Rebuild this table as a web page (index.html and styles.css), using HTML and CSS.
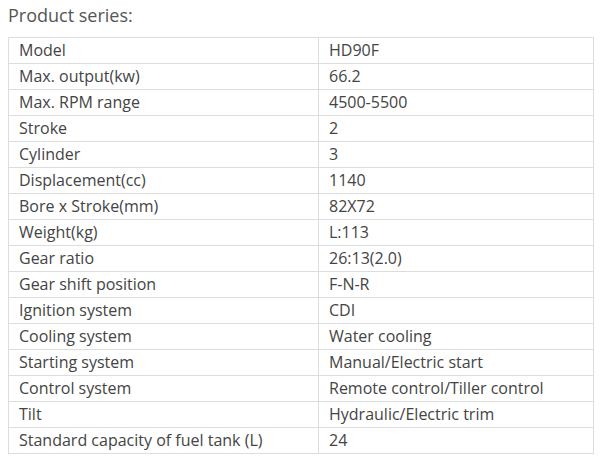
FILE: index.html
```html
<!DOCTYPE html>
<html>
<head>
<meta charset="utf-8">
<link rel="stylesheet" href="styles.css">
</head>
<body>
<h2 class="title">Product series:</h2>
<table class="spec">
<tr><td>Model</td><td>HD90F</td></tr>
<tr><td>Max. output(kw)</td><td>66.2</td></tr>
<tr><td>Max. RPM range</td><td>4500-5500</td></tr>
<tr><td>Stroke</td><td>2</td></tr>
<tr><td>Cylinder</td><td>3</td></tr>
<tr><td>Displacement(cc)</td><td>1140</td></tr>
<tr><td>Bore x Stroke(mm)</td><td>82X72</td></tr>
<tr><td>Weight(kg)</td><td>L:113</td></tr>
<tr><td>Gear ratio</td><td>26:13(2.0)</td></tr>
<tr><td>Gear shift position</td><td>F-N-R</td></tr>
<tr><td>Ignition system</td><td>CDI</td></tr>
<tr><td>Cooling system</td><td>Water cooling</td></tr>
<tr><td>Starting system</td><td>Manual/Electric start</td></tr>
<tr><td>Control system</td><td>Remote control/Tiller control</td></tr>
<tr><td>Tilt</td><td>Hydraulic/Electric trim</td></tr>
<tr><td>Standard capacity of fuel tank (L)</td><td>24</td></tr>
</table>
</body>
</html>
```
FILE: styles.css
```css
body {
  margin: 0;
  padding: 0 8px;
  font-family: "Open Sans", "Noto Sans", sans-serif;
  color: #444;
  background: #fff;
}
.title {
  margin: 0;
  height: 37px;
  font-size: 18px;
  font-weight: normal;
  line-height: 30px;
  color: #555;
}
.spec {
  width: 586px;
  border-collapse: collapse;
  font-size: 16px;
}
.spec td {
  border: 1px solid #ddd;
  height: 25px;
  padding: 0 10px;
  line-height: 25px;
  white-space: nowrap;
}
.spec td:first-child {
  width: 289px;
}
```
